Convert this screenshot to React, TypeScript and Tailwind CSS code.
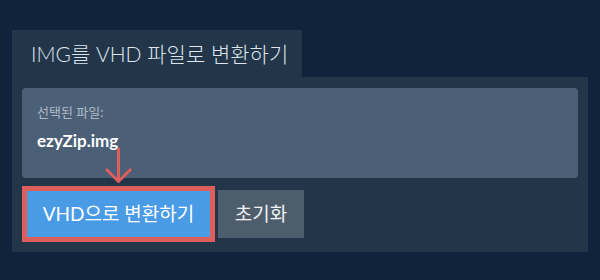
const font = { fontFamily: '"Lato", "Noto Sans CJK KR", sans-serif' }

const App = () => {
  return (
    <div className="h-[280px] w-[600px] bg-[#11233a] pl-[12px] pt-[30px]" style={font}>
      <div className="flex h-[47px] w-[290px] items-center bg-[#223549] pl-[19px]">
        <h1 className="text-[21px] font-light text-[#dde5ee]">IMG를 VHD 파일로 변환하기</h1>
      </div>
      <div className="relative w-[576px] bg-[#223549] px-[10px] pb-[10px] pt-[11px]">
        <div className="h-[90px] rounded-[4px] bg-[#4b5f77] px-[15px] pt-[14px]">
          <p className="text-[13px] leading-[20px] text-[#aeb9c6]">선택된 파일:</p>
          <p className="mt-[8px] text-[17px] font-bold leading-[22px] text-white">ezyZip.img</p>
        </div>
        <div className="mt-[8px] flex items-center gap-[3px]">
          <button className="h-[56px] w-[193px] border-[5px] border-[#dc5f5c] bg-[#4a9be6] text-[19px] text-white">
            VHD으로 변환하기
          </button>
          <button className="h-[48px] w-[86px] bg-[#4e5d6c] text-[19px] text-[#eef2f5]">초기화</button>
        </div>
        <svg className="absolute left-[93px] top-[71px]" width="28" height="36" viewBox="0 0 28 36">
          <path d="M13.5 0 V34 M1 21 L13.5 33.5 L26 21" fill="none" stroke="#dc5f5c" strokeWidth="3" />
        </svg>
      </div>
    </div>
  )
}

export default App
